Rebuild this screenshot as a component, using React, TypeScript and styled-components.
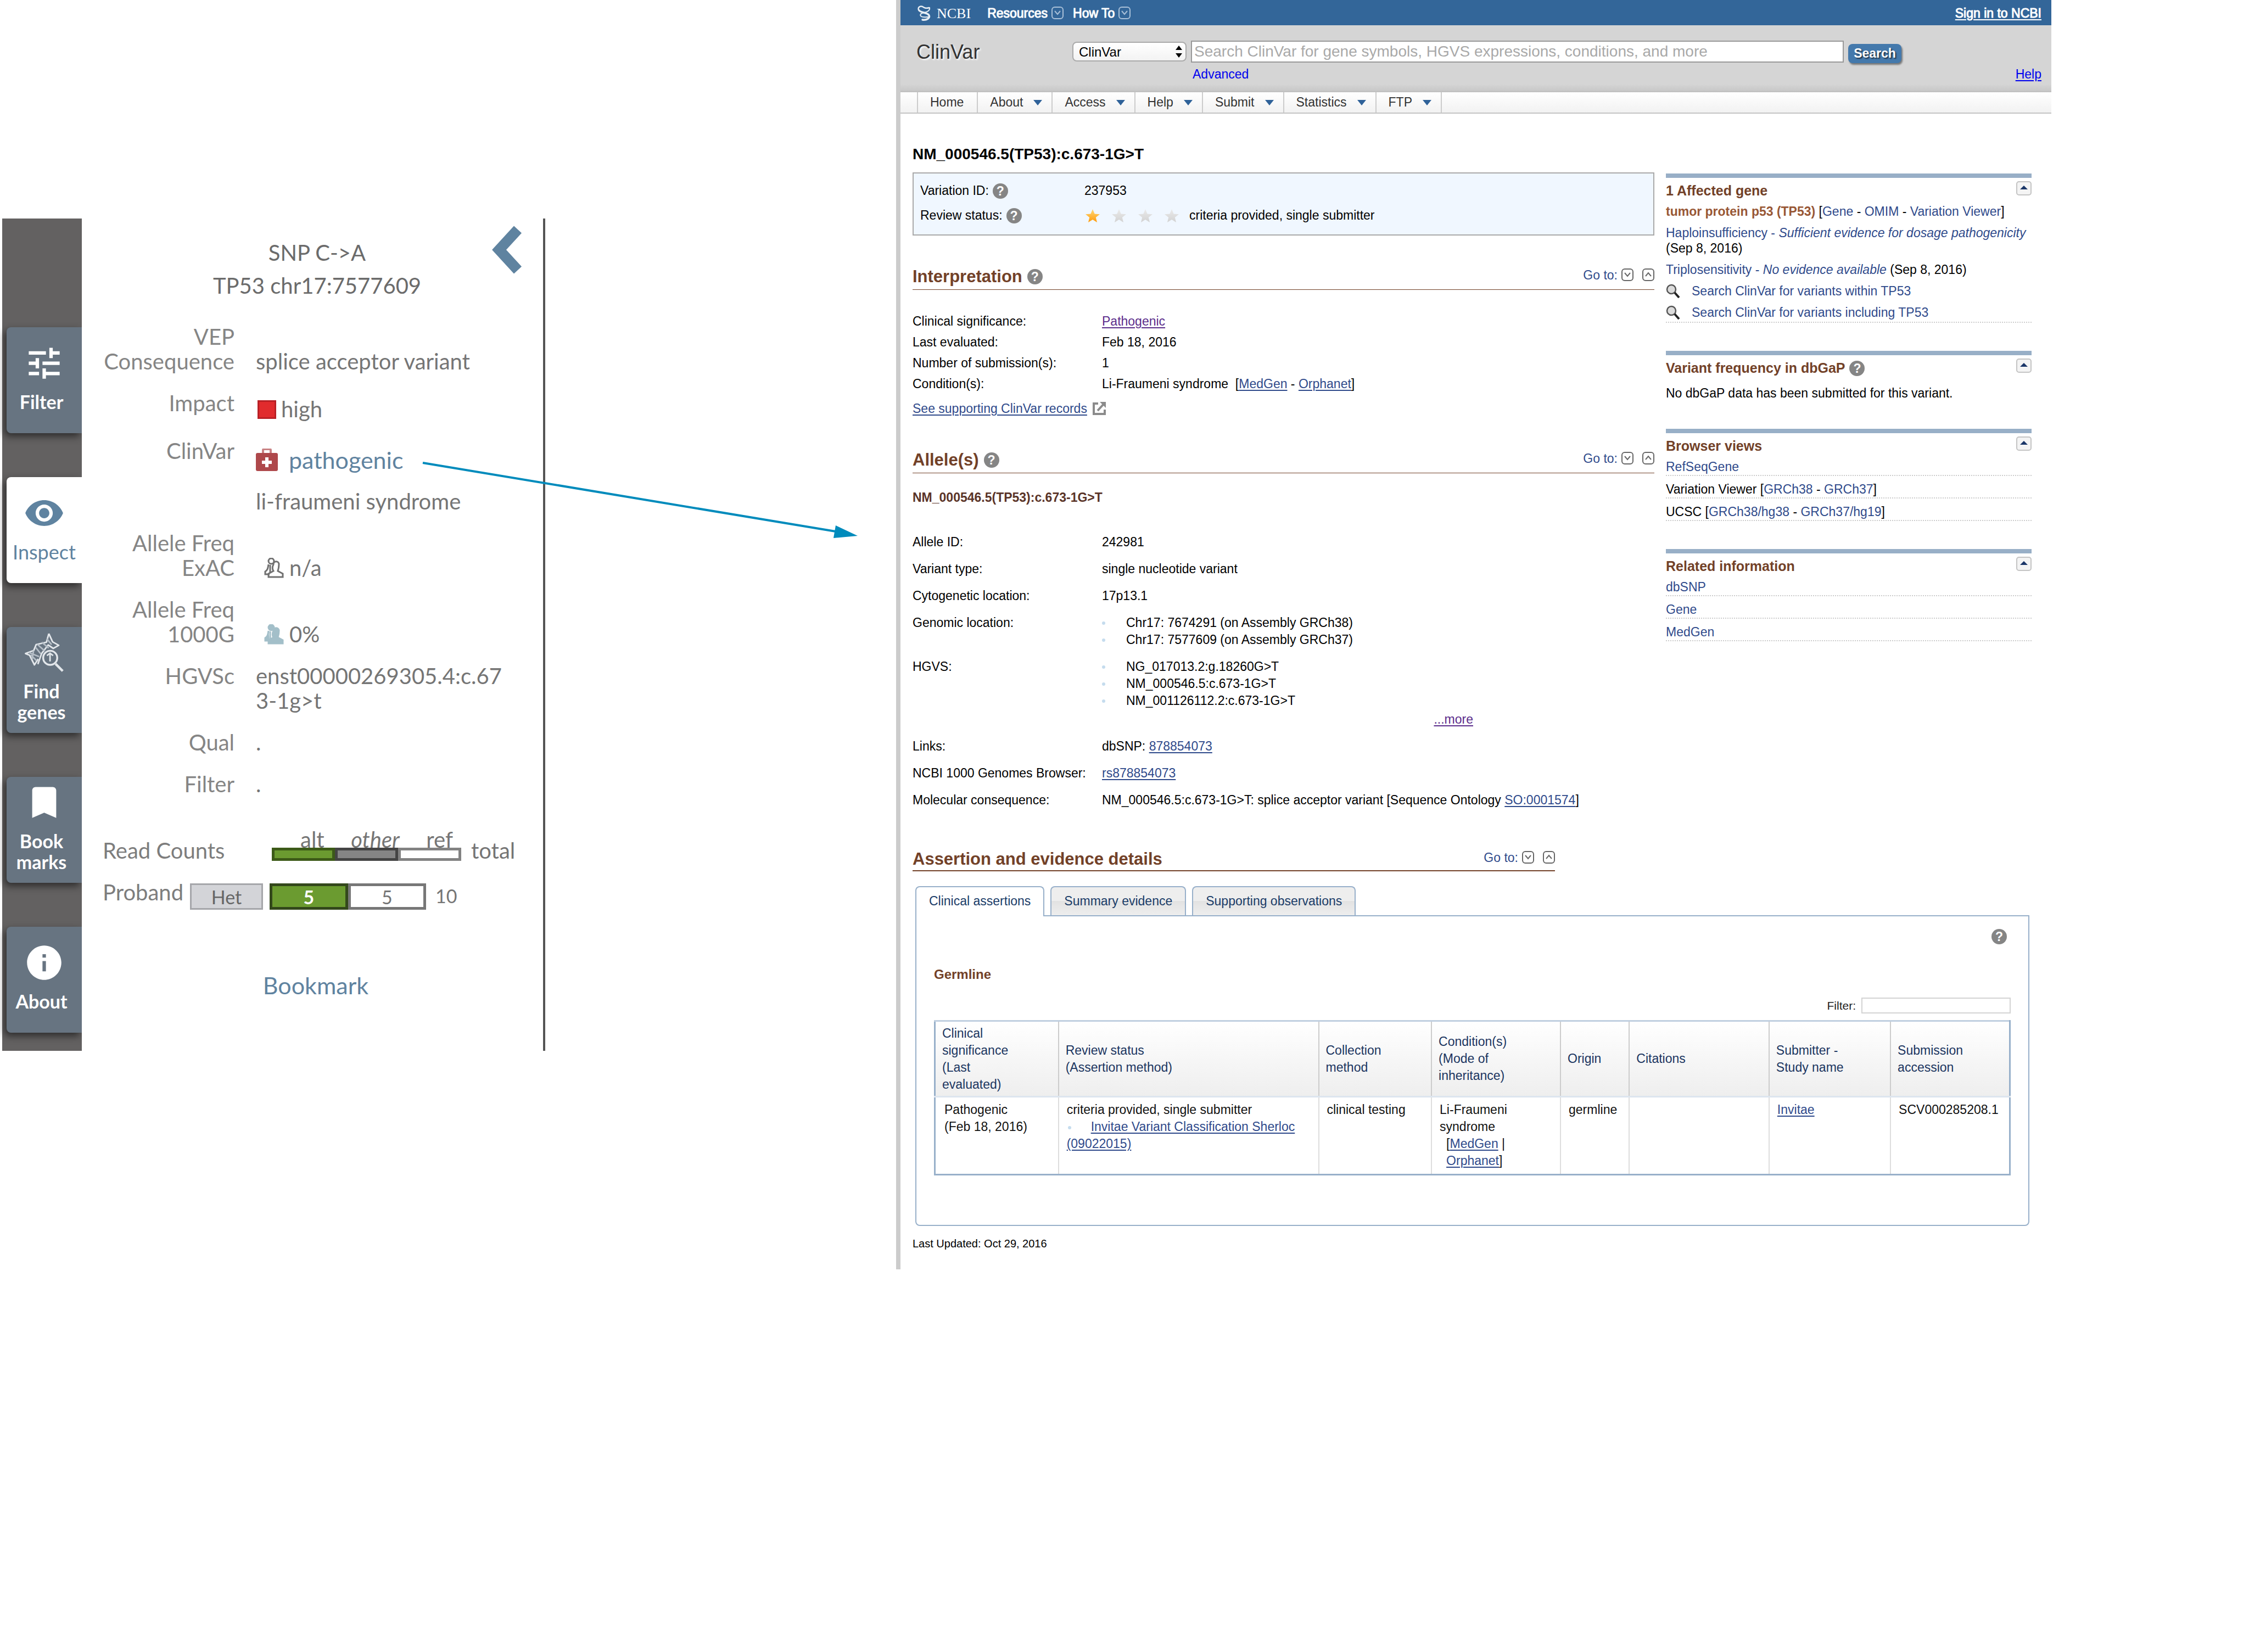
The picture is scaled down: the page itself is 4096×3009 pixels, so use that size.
import React from 'react';
import styled, { createGlobalStyle, css } from 'styled-components';
import { MdTune, MdVisibility, MdBookmark, MdInfo } from 'react-icons/md';

const brown = '#724128';
const linkBlue = '#2f4a8b';
const slate = '#677481';
const steel = '#5f83a0';
const frame = '#98b0ca';

const GlobalStyle = createGlobalStyle`
  * { box-sizing: border-box; }
  body {
    margin: 0;
    background: #fff;
    font-family: "Liberation Sans", Arial, Helvetica, sans-serif;
    font-size: 23px;
    line-height: 31px;
    color: #000;
  }
  h1, h2, h3, h4, p, ul, dl, dd { margin: 0; padding: 0; }
  ul { list-style: none; }
  button, input, select { font-family: inherit; }
  svg { display: block; }
`;

const Page = styled.div`
  position: relative;
  display: grid;
  grid-template-columns: 989fr 639fr 2104fr 360fr;
  align-items: start;
  padding-left: 4px;
`;

const Arrow = styled.svg`
  position: absolute;
  left: 760px;
  top: 830px;
  pointer-events: none;
`;

/* ---------- Inspector panel ---------- */

const Inspector = styled.section`
  grid-column: 1;
  display: flex;
  margin-top: 398px;
  border-right: 4px solid #555;
  font-family: Lato, "Open Sans", sans-serif;
  font-size: 40px;
  line-height: 45px;
  color: #757575;
`;

const TabStrip = styled.nav`
  flex: none;
  width: 145px;
  padding: 198px 0 33px 8px;
  display: flex;
  flex-direction: column;
  gap: 80px;
  background: #636161;
`;

const StripTab = styled.button<{ $active?: boolean }>`
  height: 193px;
  padding: 0 0 10px;
  border: 0;
  border-radius: 8px 0 0 8px;
  display: flex;
  flex-direction: column;
  align-items: center;
  justify-content: center;
  gap: 14px;
  font-size: ${p => (p.$active ? 36 : 34)}px;
  line-height: 38px;
  font-weight: ${p => (p.$active ? 400 : 700)};
  color: ${p => (p.$active ? steel : '#fff')};
  background: ${p => (p.$active ? '#fff' : slate)};
  box-shadow: -4px 6px 14px rgba(0, 0, 0, 0.55);
  clip-path: inset(-20px 0 -30px -12px);
`;

const StripLabel = styled.span<{ $active?: boolean }>`
  margin-right: ${p => (p.$active ? 0 : 10)}px;
`;

const InspectorBody = styled.div`
  flex: 1;
  min-width: 0;
`;

const InspectorHead = styled.header`
  display: grid;
  grid-template-columns: 1fr auto 1fr;
  padding: 13px 39px 0 56px;
`;

const VariantName = styled.h2`
  grid-column: 2;
  margin-top: 19px;
  font-size: inherit;
  font-weight: 400;
  line-height: 60px;
  text-align: center;
  color: #6b6b6b;
`;

const CloseButton = styled.button`
  justify-self: end;
  align-self: start;
  padding: 0;
  border: 0;
  background: none;
`;

const Details = styled.dl`
  display: grid;
  grid-template-columns: 240px 1fr;
  column-gap: 39px;
  row-gap: 31px;
  margin-top: 41px;
  padding-left: 38px;
`;

const Term = styled.dt`
  text-align: right;
  white-space: nowrap;
  color: #858585;
`;

const Value = styled.dd<{ $drop?: number; $indent?: number }>`
  display: flex;
  align-items: center;
  gap: 9px;
  align-self: end;
  padding-top: ${p => p.$drop ?? 0}px;
  padding-left: ${p => p.$indent ?? 0}px;
`;

const ImpactSwatch = styled.span`
  width: 34px;
  height: 34px;
  border: 3px solid #b92025;
  background: #e12b2d;
`;

const PanelLink = styled.a`
  color: ${steel};
  font-size: 43px;
  text-decoration: none;
`;

const ReadRow = styled.div<{ $top: number; $align: string }>`
  display: flex;
  align-items: ${p => p.$align};
  margin-top: ${p => p.$top}px;
  padding-left: 38px;
`;

const ReadLabel = styled.span<{ $width: number }>`
  width: ${p => p.$width}px;
  color: #7d7d7d;
`;

const Legend = styled.div`
  width: 345px;
  margin: 0 18px 4px 0;
`;

const LegendNames = styled.div`
  display: flex;
  justify-content: space-between;
  padding: 0 15px 0 52px;
  margin-bottom: -4px;
  line-height: 38px;
`;

const Meter = styled.div<{ $height: number }>`
  display: flex;
  height: ${p => p.$height}px;
`;

const MeterPart = styled.span<{ $fill: string; $edge: string; $ink?: string }>`
  flex: 1;
  display: flex;
  align-items: center;
  justify-content: center;
  border: 5px solid ${p => p.$edge};
  background: ${p => p.$fill};
  color: ${p => p.$ink ?? 'inherit'};
  font-weight: ${p => (p.$ink ? 700 : 400)};
`;

const ReadMeter = styled(Meter)`
  width: 285px;
  margin: 6px 17px 0 12px;
  font-size: 34px;
`;

const Genotype = styled.span`
  width: 133px;
  height: 48px;
  margin-top: 6px;
  border: 3px solid #a5a6aa;
  background: #d3d4d8;
  color: #666;
  font-size: 34px;
  line-height: 44px;
  text-align: center;
`;

const ReadTotal = styled.span`
  padding-top: 6px;
  font-size: 34px;
`;

const BookmarkRow = styled.p`
  padding: 115px 10px 0 22px;
  text-align: center;
`;

/* ---------- ClinVar page ---------- */

const ClinVarPage = styled.main`
  grid-column: 3;
  border-left: 8px solid #ccc;
  padding-bottom: 34px;
`;

const TopBar = styled.div`
  display: flex;
  align-items: center;
  height: 46px;
  padding: 2px 18px 0 31px;
  background: #336699;
  color: #fff;
`;

const LogoText = styled.span`
  margin: 0 30px 0 9px;
  font-family: "Liberation Serif", serif;
  font-size: 26px;
`;

const TopMenu = styled.button`
  display: flex;
  align-items: center;
  gap: 7px;
  margin-right: 17px;
  padding: 0;
  border: 0;
  background: none;
  color: #fff;
  font-size: 23px;
  -webkit-text-stroke: 1px #fff;
`;

const SignIn = styled.a`
  margin-left: auto;
  color: #fff;
  -webkit-text-stroke: 1px #fff;
  text-underline-offset: 3px;
`;

const SearchArea = styled.header`
  height: 122px;
  padding-top: 28px;
  background: linear-gradient(#d5d5d5 0 88%, #c9c9c9 97%, #bdbdbd 100%);
`;

const SearchForm = styled.form`
  display: flex;
  align-items: center;
  gap: 8px;
  height: 40px;
  padding: 0 273px 0 29px;
`;

const SiteName = styled.div`
  width: 276px;
  font-size: 36px;
  color: #333;
  text-shadow: 2px 2px 3px #fff;
`;

const SelectWrap = styled.span`
  position: relative;
  width: 208px;
`;

const DatabaseSelect = styled.select`
  display: block;
  width: 100%;
  height: 36px;
  padding: 0 10px;
  appearance: none;
  border: 2px solid #aaa;
  border-radius: 8px;
  background: linear-gradient(#fff, #f3f3f3);
  font-size: 24px;
  color: #000;
`;

const SelectArrows = styled.svg`
  position: absolute;
  right: 7px;
  top: 6px;
  pointer-events: none;
`;

const SearchInput = styled.input`
  flex: 1;
  min-width: 0;
  height: 40px;
  padding: 0 4px;
  border: 2px solid #999;
  background: #fff;
  font-size: 28px;
  &::placeholder { color: #a9a9a9; opacity: 1; }
`;

const SearchButton = styled.button`
  width: 97px;
  height: 35px;
  margin-top: 6px;
  padding: 0;
  border: 0;
  border-radius: 8px;
  background: #4479ac;
  color: #fff;
  font-size: 23px;
  font-weight: 700;
  text-shadow: 2px 2px 2px #234;
  box-shadow: 2px 3px 3px #777;
`;

const SearchExtras = styled.div`
  display: flex;
  justify-content: space-between;
  margin-top: 7px;
  padding: 0 18px 0 532px;
  line-height: 28px;
`;

const PlainLink = styled.a<{ $line?: boolean }>`
  color: #0000ee;
  text-decoration: ${p => (p.$line ? 'underline' : 'none')};
  text-underline-offset: 3px;
`;

const MenuBar = styled.nav`
  height: 39px;
  padding-left: 30px;
  border-bottom: 2px solid #c4c4c4;
  background: linear-gradient(#fff, #f2f2f2);
`;

const MenuList = styled.ul`
  display: flex;
  width: max-content;
  border-left: 2px solid #ccc;
`;

const MenuItem = styled.li`
  display: flex;
  align-items: center;
  gap: 19px;
  height: 37px;
  padding: 0 17px 0 22px;
  border-right: 2px solid #ccc;
  &:first-child { padding: 0 24px 0 22px; }
`;

const MenuLink = styled.a`
  color: #333;
  text-decoration: none;
`;

const Content = styled.div`
  padding: 56px 36px 0 22px;
`;

const Title = styled.h1`
  margin-bottom: 15px;
  font-size: 28px;
  line-height: 36px;
`;

const Columns = styled.div`
  display: grid;
  grid-template-columns: 1351fr 666fr;
  column-gap: 21px;
  align-items: start;
`;

const Summary = styled.dl`
  padding: 9px 12px 12px;
  border: 2px solid #a9a9a9;
  background: #f0f7ff;
`;

const SummaryRow = styled.div`
  display: grid;
  grid-template-columns: 299px 1fr;
  line-height: 45px;
`;

const Inline = styled.span`
  display: flex;
  align-items: center;
  gap: 7px;
`;

const Stars = styled.span`
  display: flex;
  gap: 22px;
  margin: 0 12px 0 2px;
`;

const HelpMark = styled.button`
  flex: none;
  width: 28px;
  height: 28px;
  padding: 0;
  border: 0;
  border-radius: 50%;
  background: #858585;
  color: #fff;
  font-size: 23px;
  line-height: 28px;
  font-weight: 700;
  text-align: center;
`;

const SectionHead = styled.div<{ $tight?: boolean }>`
  display: flex;
  justify-content: space-between;
  align-items: flex-start;
  max-width: ${p => (p.$tight ? '1170px' : 'none')};
  margin-top: ${p => (p.$tight ? 54 : 55)}px;
  padding-bottom: ${p => (p.$tight ? 0 : 3)}px;
  border-bottom: ${p => (p.$tight ? 2 : 1)}px solid ${brown};
`;

const SectionTitle = styled.h2`
  display: flex;
  align-items: center;
  gap: 9px;
  font-size: 31px;
  line-height: 40px;
  color: ${brown};
`;

const GoTo = styled.div`
  display: flex;
  align-items: center;
  gap: 7px;
  height: 34px;
  color: ${linkBlue};
`;

const IconButton = styled.button<{ $before?: number }>`
  margin-left: ${p => p.$before ?? 0}px;
  padding: 0;
  border: 0;
  background: none;
`;

const Facts = styled.dl<{ $top: number; $line: number; $gap: number }>`
  display: grid;
  grid-template-columns: 345px 1fr;
  row-gap: ${p => p.$gap}px;
  margin-top: ${p => p.$top}px;
  padding-bottom: ${p => p.$gap}px;
  line-height: ${p => p.$line}px;
`;

const textLink = css`
  color: ${linkBlue};
  text-underline-offset: 3px;
  text-decoration-thickness: 2px;
`;

const Link = styled.a<{ $visited?: boolean }>`
  ${textLink}
  ${p => p.$visited && 'color: #5b2d8b;'}
`;

const Records = styled.p`
  display: flex;
  align-items: center;
  gap: 10px;
  margin-top: 7px;
  line-height: 38px;
`;

const AlleleName = styled.h3`
  margin-top: 25px;
  font-size: 23px;
  line-height: 38px;
  color: #5a3428;
`;

const Bullets = styled.ul`
  li {
    display: flex;
    align-items: center;
    gap: 38px;
  }
`;

const Dot = styled.i`
  display: inline-block;
  width: 6px;
  height: 6px;
  border-radius: 50%;
  background: #c5dcee;
`;

const MoreLine = styled.p`
  width: 676px;
  margin-top: 3px;
  text-align: right;
`;

/* ---------- Side column ---------- */

const Side = styled.aside`
  display: flex;
  flex-direction: column;
  gap: 51px;
  padding-top: 2px;
  line-height: 28px;
`;

const Module = styled.section`
  border-top: 8px solid #98afc7;
  padding-top: 6px;
`;

const ModuleHead = styled.div`
  display: flex;
  justify-content: space-between;
  align-items: flex-start;
`;

const ModuleTitle = styled.h3`
  display: flex;
  align-items: center;
  gap: 8px;
  font-size: 25px;
  line-height: 35px;
  color: ${brown};
`;

const ModuleNote = styled.p`
  margin-top: 14px;
`;

const GeneList = styled.ul`
  display: flex;
  flex-direction: column;
  gap: 11px;
  margin-top: 6px;
  padding-bottom: 3px;
  border-bottom: 2px dotted #ccc;
`;

const SearchItem = styled.li`
  display: flex;
  align-items: center;
  gap: 21px;
`;

const RuledList = styled.ul`
  display: flex;
  flex-direction: column;
  gap: 10px;
  margin-top: 6px;
  li {
    padding-bottom: 1px;
    border-bottom: 2px dotted #ccc;
  }
`;

const SideLink = styled.a`
  color: ${linkBlue};
  text-decoration: none;
`;

const Gene = styled.strong`
  color: #985735;
`;

/* ---------- Assertions ---------- */

const Tabs = styled.div`
  display: flex;
  align-items: flex-start;
  gap: 11px;
  margin: 27px 0 0 5px;
`;

const Tab = styled.button<{ $active?: boolean }>`
  position: relative;
  height: ${p => (p.$active ? 55 : 53)}px;
  margin-bottom: ${p => (p.$active ? -2 : 0)}px;
  padding: 0 23px ${p => (p.$active ? 2 : 0)}px;
  border: 2px solid ${frame};
  border-bottom: 0;
  border-radius: 8px 8px 0 0;
  background: ${p => (p.$active ? '#fff' : 'linear-gradient(#eee 0 50%, #e2e2e2 50%, #eee 100%)')};
  font-size: 23px;
  color: #1a3c68;
`;

const TabPanel = styled.section`
  margin: 0 4px 0 5px;
  padding: 23px 32px 90px;
  border: 2px solid ${frame};
  border-radius: 0 0 8px 8px;
`;

const PanelHelp = styled.div`
  display: flex;
  justify-content: flex-end;
  padding-right: 7px;
`;

const Origin = styled.h3`
  margin-top: 40px;
  font-size: 24px;
  line-height: 30px;
  color: ${brown};
`;

const FilterRow = styled.label`
  display: flex;
  justify-content: flex-end;
  align-items: center;
  gap: 10px;
  height: 29px;
  margin: 27px 0 12px;
  font-size: 21px;
  color: #222;
`;

const FilterInput = styled.input`
  width: 272px;
  height: 29px;
  border: 2px solid #d3d3d3;
  background: #fff;
`;

const Table = styled.table`
  width: 100%;
  table-layout: fixed;
  border-collapse: collapse;
  border: 3px solid ${frame};
  border-top-color: #c0cfe0;
  text-align: left;
`;

const HeadCell = styled.th`
  height: 138px;
  padding: 0 12px;
  border-right: 2px solid #ccc;
  border-bottom: 3px solid #dde5ef;
  font-weight: 400;
  color: #1b3560;
`;

const HeadRow = styled.tr`
  background: linear-gradient(#fff, #eee);
`;

const Cell = styled.td<{ $first?: boolean }>`
  height: 142px;
  padding: 7px 8px 0 ${p => (p.$first ? 16 : 14)}px;
  border-right: 2px solid #ddd;
  vertical-align: top;
  color: #111;
`;

const MethodDot = styled(Dot)`
  margin: 0 36px 3px 2px;
`;

const Sources = styled.span`
  display: block;
  padding-left: 12px;
`;

const Updated = styled.p`
  margin-top: 19px;
  font-size: 20px;
  line-height: 26px;
`;

/* ---------- Drawings ---------- */

const Chip = ({ up, color = '#666', fill = '#fff' }: { up?: boolean; color?: string; fill?: string }) => (
  <svg width="22" height="24" viewBox="0 0 22 24" fill="none">
    <rect x="1" y="1" width="20" height="21" rx="5" fill={fill} stroke={color} strokeWidth="2" />
    <path d={up ? 'M6 14l5-6 5 6' : 'M6 8l5 6 5-6'} stroke={color} strokeWidth="2" />
  </svg>
);

const Collapse = () => (
  <svg width="28" height="26" viewBox="0 0 28 26">
    <rect x="1" y="1" width="26" height="24" rx="4" fill="#f4f4f4" stroke="#c4c4c4" strokeWidth="2" />
    <path d="M7 15l7-7 7 7z" fill="#1a3668" />
  </svg>
);

const Star = ({ on }: { on?: boolean }) => (
  <svg width="26" height="24" viewBox="0 0 26 24">
    <defs>
      <linearGradient id={on ? 'gold' : 'grey'} x1="0" y1="0" x2="0" y2="1">
        <stop offset="0" stopColor={on ? '#ffd978' : '#eaeaea'} />
        <stop offset="1" stopColor={on ? '#ff9a0a' : '#d2d2d2'} />
      </linearGradient>
    </defs>
    <path d="M13 0l3.600 8.600L26 9.200l-7.200 5.900L21 24l-8-5-8 5 2.200-8.900L0 9.200l9.400-.6z" fill={`url(#${on ? 'gold' : 'grey'})`} />
  </svg>
);

const Caret = () => (
  <svg width="16" height="10" viewBox="0 0 16 10"><path d="M0 0h16L8 10z" fill="#2f6299" /></svg>
);

const Magnifier = () => (
  <svg width="26" height="26" viewBox="0 0 26 26" fill="none">
    <circle cx="10" cy="10" r="8" fill="#dcdcdc" stroke="#555" strokeWidth="2.500" />
    <path d="M16 16l8 9" stroke="#222" strokeWidth="4" />
  </svg>
);

const External = () => (
  <svg width="25" height="26" viewBox="0 0 25 26" fill="none" stroke="#8b8b8b" strokeWidth="4">
    <path d="M10 4H2v19h20v-8" />
    <path d="M9 17l11-12" />
    <path d="M13 1h11v11z" fill="#8b8b8b" stroke="none" />
  </svg>
);

const NcbiMark = () => (
  <svg width="26" height="30" viewBox="0 0 26 30" fill="none" stroke="#e6edf4" strokeLinecap="round">
    <path d="M2 9C0 3 6 2 9 3c3 2 6 4 12 2" strokeWidth="2.500" />
    <path d="M3 10c4 5 15 3 18 9 2 5-4 9-12 8" strokeWidth="3.500" />
    <path d="M22 5c1 6-5 8-10 9-6 1-9 4-5 7 3 2 9 1 13 1" strokeWidth="2" />
  </svg>
);

const Medkit = () => (
  <svg width="40" height="41" viewBox="0 0 40 41">
    <path d="M13 9V3q0-2 2-2h10q2 0 2 2v6" fill="none" stroke="#c98284" strokeWidth="4" />
    <rect y="8" width="40" height="33" rx="3" fill="#ae484b" />
    <path d="M20 16v18M11 25h18" stroke="#fff" strokeWidth="6" />
  </svg>
);

const Eye = () => (
  <MdVisibility size={75} viewBox="0 0 24 24" />
);

const FindGenes = () => (
  <svg width="75" height="75" viewBox="70 52 240 240" fill="none" stroke="#e3e7eb" strokeWidth="9">
    <path d="M217 62l-14 50-60 14-14 34-48 18 24 10 28 56 22-34" strokeLinejoin="round" />
    <path d="M217 62l22 48 36 20-32 18-30-20-38 50-22 62" strokeLinejoin="round" />
    <path d="M150 124l44 40M176 112l40 34M100 172l60 24M128 160l-8 50M205 92l28 34M140 142l30 38M112 186l34 34" stroke="#b4bdc6" />
    <circle cx="225" cy="203" r="41" fill={slate} strokeWidth="11" />
    <path d="M206 190l18-14 18 14M224 178v46" stroke="#dfe4e8" />
    <path d="M256 238l42 42" strokeWidth="14" />
  </svg>
);

const Population = ({ filled }: { filled?: boolean }) => (
  <svg width="38" height="38" viewBox="0 0 38 38" fill={filled ? '#a3bfc9' : 'none'} stroke={filled ? '#a3bfc9' : '#707070'} strokeWidth="3">
    <circle cx="14" cy="6" r="5" />
    <path d="M9 12c-1 6-1 10-6 13v5h8M12 13v14" />
    <path d="M18 12c0-7 10-7 10 0 0 6-1 9-2 12l9 5v6H9v-6l9-5c-2-3-2-8 0-12z" />
  </svg>
);

const Help = () => <HelpMark type="button" aria-label="Help">?</HelpMark>;

const GoToNav = () => (
  <GoTo>
    <span>Go to:</span>
    <IconButton type="button" aria-label="Next section"><Chip /></IconButton>
    <IconButton type="button" aria-label="Previous section" $before={9}><Chip up /></IconButton>
  </GoTo>
);

const SideModule = ({ title, help, children }: { title: string; help?: boolean; children: React.ReactNode }) => (
  <Module>
    <ModuleHead>
      <ModuleTitle>{title}{help && <Help />}</ModuleTitle>
      <IconButton type="button" aria-label={`Collapse ${title}`}><Collapse /></IconButton>
    </ModuleHead>
    {children}
  </Module>
);

const stripTabs = [
  { icon: <MdTune size={75} />, label: 'Filter' },
  { icon: <Eye />, label: 'Inspect', active: true },
  { icon: <FindGenes />, label: <>Find<br />genes</> },
  { icon: <MdBookmark size={75} />, label: <>Book<br />marks</> },
  { icon: <MdInfo size={75} />, label: 'About' },
];

const menu = ['Home', 'About', 'Access', 'Help', 'Submit', 'Statistics', 'FTP'];

const columnWidths = [11.5, 24.2, 10.5, 12, 6.4, 13, 11.3, 11.1];

const InspectorPanel = () => (
  <Inspector>
    <TabStrip>
      {stripTabs.map((t, i) => (
        <StripTab key={i} type="button" $active={t.active}>
          {t.icon}
          <StripLabel $active={t.active}>{t.label}</StripLabel>
        </StripTab>
      ))}
    </TabStrip>
    <InspectorBody>
      <InspectorHead>
        <VariantName>SNP C-&gt;A<br />TP53 chr17:7577609</VariantName>
        <CloseButton type="button" aria-label="Close panel">
          <svg width="56" height="88" viewBox="0 0 56 88" fill="none">
            <path d="M49 7L15 44l34 37" stroke={steel} strokeWidth="19" />
          </svg>
        </CloseButton>
      </InspectorHead>
      <Details>
        <Term>VEP<br />Consequence</Term>
        <Value>splice acceptor variant</Value>
        <Term>Impact</Term>
        <Value $drop={11} $indent={3}><ImpactSwatch />high</Value>
        <Term>ClinVar</Term>
        <Value $drop={16}><Medkit /><PanelLink href="#clinvar">&nbsp;pathogenic</PanelLink></Value>
        <Term />
        <Value>li-fraumeni syndrome</Value>
        <Term>Allele Freq<br />ExAC</Term>
        <Value $indent={14}><Population />n/a</Value>
        <Term>Allele Freq<br />1000G</Term>
        <Value $indent={14}><Population filled />0%</Value>
        <Term>HGVSc</Term>
        <Value>enst00000269305.4:c.67<br />3-1g&gt;t</Value>
        <Term>Qual</Term>
        <Value>.</Value>
        <Term>Filter</Term>
        <Value>.</Value>
      </Details>
      <ReadRow $top={59} $align="flex-end">
        <ReadLabel $width={308}>Read Counts</ReadLabel>
        <Legend>
          <LegendNames><span>alt</span><em>other</em><span>ref</span></LegendNames>
          <Meter $height={24}>
            <MeterPart $fill="#6b9b30" $edge="#3c5a18" />
            <MeterPart $fill="#858585" $edge="#444" />
            <MeterPart $fill="#fff" $edge="#828282" />
          </Meter>
        </Legend>
        <span>total</span>
      </ReadRow>
      <ReadRow $top={31} $align="flex-start">
        <ReadLabel $width={159}>Proband</ReadLabel>
        <Genotype>Het</Genotype>
        <ReadMeter $height={48}>
          <MeterPart $fill="#6b9b30" $edge="#33481b" $ink="#fff">5</MeterPart>
          <MeterPart $fill="#fff" $edge="#777">5</MeterPart>
        </ReadMeter>
        <ReadTotal>10</ReadTotal>
      </ReadRow>
      <BookmarkRow><PanelLink href="#bookmark">Bookmark</PanelLink></BookmarkRow>
    </InspectorBody>
  </Inspector>
);

const SideColumn = () => (
  <Side>
    <SideModule title="1 Affected gene">
      <GeneList>
        <li><Gene>tumor protein p53 (TP53)</Gene> [<SideLink href="#gene">Gene</SideLink> - <SideLink href="#omim">OMIM</SideLink> - <SideLink href="#viewer">Variation Viewer</SideLink>]</li>
        <li><SideLink href="#haplo">Haploinsufficiency - <em>Sufficient evidence for dosage pathogenicity</em></SideLink><br />(Sep 8, 2016)</li>
        <li><SideLink href="#triplo">Triplosensitivity - <em>No evidence available</em></SideLink> (Sep 8, 2016)</li>
        <SearchItem><Magnifier /><SideLink href="#within">Search ClinVar for variants within TP53</SideLink></SearchItem>
        <SearchItem><Magnifier /><SideLink href="#including">Search ClinVar for variants including TP53</SideLink></SearchItem>
      </GeneList>
    </SideModule>
    <SideModule title="Variant frequency in dbGaP" help>
      <ModuleNote>No dbGaP data has been submitted for this variant.</ModuleNote>
    </SideModule>
    <SideModule title="Browser views">
      <RuledList>
        <li><SideLink href="#refseqgene">RefSeqGene</SideLink></li>
        <li>Variation Viewer [<SideLink href="#v38">GRCh38</SideLink> - <SideLink href="#v37">GRCh37</SideLink>]</li>
        <li>UCSC [<SideLink href="#hg38">GRCh38/hg38</SideLink> - <SideLink href="#hg19">GRCh37/hg19</SideLink>]</li>
      </RuledList>
    </SideModule>
    <SideModule title="Related information">
      <RuledList>
        {['dbSNP', 'Gene', 'MedGen'].map(name => (
          <li key={name}><SideLink href={`#${name}`}>{name}</SideLink></li>
        ))}
      </RuledList>
    </SideModule>
  </Side>
);

const Assertions = () => (
  <>
    <SectionHead $tight>
      <SectionTitle>Assertion and evidence details</SectionTitle>
      <GoToNav />
    </SectionHead>
    <Tabs role="tablist">
      <Tab role="tab" aria-selected $active>Clinical assertions</Tab>
      <Tab role="tab">Summary evidence</Tab>
      <Tab role="tab">Supporting observations</Tab>
    </Tabs>
    <TabPanel>
      <PanelHelp><Help /></PanelHelp>
      <Origin>Germline</Origin>
      <FilterRow>Filter:<FilterInput type="text" /></FilterRow>
      <Table>
        <colgroup>{columnWidths.map((w, i) => <col key={i} style={{ width: `${w}%` }} />)}</colgroup>
        <thead>
          <HeadRow>
            <HeadCell>Clinical<br />significance<br />(Last<br />evaluated)</HeadCell>
            <HeadCell>Review status<br />(Assertion method)</HeadCell>
            <HeadCell>Collection<br />method</HeadCell>
            <HeadCell>Condition(s)<br />(Mode of<br />inheritance)</HeadCell>
            <HeadCell>Origin</HeadCell>
            <HeadCell>Citations</HeadCell>
            <HeadCell>Submitter -<br />Study name</HeadCell>
            <HeadCell>Submission<br />accession</HeadCell>
          </HeadRow>
        </thead>
        <tbody>
          <tr>
            <Cell $first>Pathogenic<br />(Feb 18, 2016)</Cell>
            <Cell>criteria provided, single submitter<br /><MethodDot /><Link href="#method">Invitae Variant Classification Sherloc<br />(09022015)</Link></Cell>
            <Cell>clinical testing</Cell>
            <Cell>Li-Fraumeni<br />syndrome<Sources>[<Link href="#medgen">MedGen</Link> |<br /><Link href="#orphanet">Orphanet</Link>]</Sources></Cell>
            <Cell>germline</Cell>
            <Cell />
            <Cell><Link href="#invitae">Invitae</Link></Cell>
            <Cell>SCV000285208.1</Cell>
          </tr>
        </tbody>
      </Table>
    </TabPanel>
    <Updated>Last Updated: Oct 29, 2016</Updated>
  </>
);

export default function App() {
  return (
    <Page>
      <GlobalStyle />
      <InspectorPanel />
      <ClinVarPage>
        <TopBar>
          <NcbiMark />
          <LogoText>NCBI</LogoText>
          <TopMenu type="button">Resources<Chip color="#a9c0d8" fill="none" /></TopMenu>
          <TopMenu type="button">How To<Chip color="#a9c0d8" fill="none" /></TopMenu>
          <SignIn href="#signin">Sign in to NCBI</SignIn>
        </TopBar>
        <SearchArea>
          <SearchForm>
            <SiteName>ClinVar</SiteName>
            <SelectWrap>
              <DatabaseSelect aria-label="Database"><option>ClinVar</option></DatabaseSelect>
              <SelectArrows width="14" height="24" viewBox="0 0 14 24"><path d="M1 9l6-8 6 8zM1 15l6 8 6-8z" /></SelectArrows>
            </SelectWrap>
            <SearchInput aria-label="Search ClinVar" placeholder="Search ClinVar for gene symbols, HGVS expressions, conditions, and more" />
            <SearchButton type="button">Search</SearchButton>
          </SearchForm>
          <SearchExtras>
            <PlainLink href="#advanced">Advanced</PlainLink>
            <PlainLink href="#help" $line>Help</PlainLink>
          </SearchExtras>
        </SearchArea>
        <MenuBar>
          <MenuList>
            {menu.map((name, i) => (
              <MenuItem key={name}><MenuLink href={`#menu-${name}`}>{name}</MenuLink>{i > 0 && <Caret />}</MenuItem>
            ))}
          </MenuList>
        </MenuBar>
        <Content>
          <Title>NM_000546.5(TP53):c.673-1G&gt;T</Title>
          <Columns>
            <div>
              <Summary>
                <SummaryRow>
                  <dt><Inline>Variation ID: <Help /></Inline></dt>
                  <dd>237953</dd>
                </SummaryRow>
                <SummaryRow>
                  <dt><Inline>Review status: <Help /></Inline></dt>
                  <dd><Inline><Stars><Star on /><Star /><Star /><Star /></Stars>criteria provided, single submitter</Inline></dd>
                </SummaryRow>
              </Summary>

              <SectionHead>
                <SectionTitle>Interpretation<Help /></SectionTitle>
                <GoToNav />
              </SectionHead>
              <Facts $top={38} $line={38} $gap={0}>
                <dt>Clinical significance:</dt>
                <dd><Link href="#pathogenic" $visited>Pathogenic</Link></dd>
                <dt>Last evaluated:</dt>
                <dd>Feb 18, 2016</dd>
                <dt>Number of submission(s):</dt>
                <dd>1</dd>
                <dt>Condition(s):</dt>
                <dd>Li-Fraumeni syndrome&nbsp; [<Link href="#medgen">MedGen</Link> - <Link href="#orphanet">Orphanet</Link>]</dd>
              </Facts>
              <Records><Link href="#records">See supporting ClinVar records</Link><External /></Records>

              <SectionHead>
                <SectionTitle>Allele(s)<Help /></SectionTitle>
                <GoToNav />
              </SectionHead>
              <AlleleName>NM_000546.5(TP53):c.673-1G&gt;T</AlleleName>
              <Facts $top={47} $line={31} $gap={18}>
                <dt>Allele ID:</dt>
                <dd>242981</dd>
                <dt>Variant type:</dt>
                <dd>single nucleotide variant</dd>
                <dt>Cytogenetic location:</dt>
                <dd>17p13.1</dd>
                <dt>Genomic location:</dt>
                <dd>
                  <Bullets>
                    <li><Dot />Chr17: 7674291 (on Assembly GRCh38)</li>
                    <li><Dot />Chr17: 7577609 (on Assembly GRCh37)</li>
                  </Bullets>
                </dd>
                <dt>HGVS:</dt>
                <dd>
                  <Bullets>
                    <li><Dot />NG_017013.2:g.18260G&gt;T</li>
                    <li><Dot />NM_000546.5:c.673-1G&gt;T</li>
                    <li><Dot />NM_001126112.2:c.673-1G&gt;T</li>
                  </Bullets>
                  <MoreLine><Link href="#more" $visited>...more</Link></MoreLine>
                </dd>
                <dt>Links:</dt>
                <dd>dbSNP: <Link href="#dbsnp">878854073</Link></dd>
                <dt>NCBI 1000 Genomes Browser:</dt>
                <dd><Link href="#rs">rs878854073</Link></dd>
                <dt>Molecular consequence:</dt>
                <dd>NM_000546.5:c.673-1G&gt;T: splice acceptor variant [Sequence Ontology <Link href="#so">SO:0001574</Link>]</dd>
              </Facts>
            </div>
            <SideColumn />
          </Columns>
          <Assertions />
        </Content>
      </ClinVarPage>
      <Arrow width="810" height="160" viewBox="760 830 810 160">
        <path d="M770 843L1522 968" stroke="#008bbc" strokeWidth="4" />
        <path d="M1522 957L1562 976L1518 980z" fill="#008bbc" />
      </Arrow>
    </Page>
  );
}
